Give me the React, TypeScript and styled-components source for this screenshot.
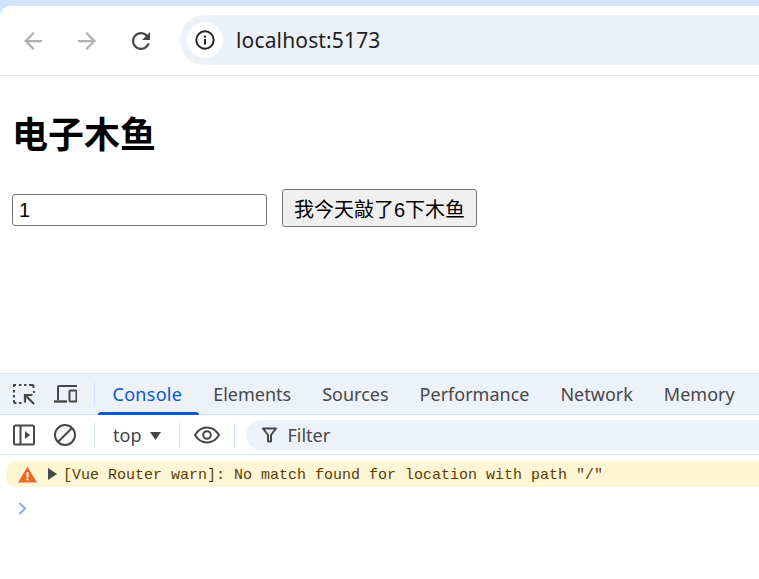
import React from "react";
import styled, { createGlobalStyle } from "styled-components";

const Global = createGlobalStyle`
  html, body { margin: 0; padding: 0; background: #fff; }
  * { box-sizing: border-box; }
`;

const Frame = styled.div`
  width: 759px;
  height: 579px;
  overflow: hidden;
  background: #d3e3fd;
  padding-top: 6px;
  display: flex;
  flex-direction: column;
  font-family: "Noto Sans", "Open Sans", sans-serif;
`;

const Toolbar = styled.header`
  height: 70px;
  flex: none;
  background: #fff;
  border-top-left-radius: 10px;
  border-bottom: 1px solid #e1e3e6;
  display: flex;
  align-items: center;
  padding: 0 0 1px 21px;
`;

const NavButton = styled.div`
  width: 24px;
  height: 24px;
  flex: none;
  margin: 2px 30px 0 0;
  color: ${(p: { $dim?: boolean }) => (p.$dim ? "#aeb0b3" : "#474747")};
  svg { display: block; }
`;

const Omnibox = styled.div`
  flex: 1;
  height: 50px;
  margin-left: -3px;
  margin-right: -40px;
  background: #ecf0f9;
  border-radius: 25px;
  display: flex;
  align-items: center;
  padding-left: 7px;
`;

const SiteInfo = styled.div`
  width: 36px;
  height: 36px;
  border-radius: 50%;
  background: #fff;
  display: flex;
  align-items: center;
  justify-content: center;
  color: #1f1f1f;
`;

const Url = styled.span`
  margin-left: 13px;
  font-size: 21px;
  letter-spacing: 0.15px;
  line-height: 24px;
  color: #1f1f1f;
`;

const Page = styled.main`
  height: 297px;
  flex: none;
  background: #fff;
  padding: 0 12px;
`;

const Title = styled.h1`
  margin: 0;
  padding: 38px 0 0;
  height: 113px;
  font-family: "Liberation Sans", "Noto Sans CJK SC", sans-serif;
  font-size: 36px;
  line-height: 44px;
  font-weight: 700;
  color: #000;
`;

const Form = styled.div`
  display: flex;
  align-items: flex-start;
  gap: 15px;
`;

const CountInput = styled.input`
  width: 255px;
  height: 32px;
  margin-top: 5px;
  padding: 1px 6px;
  border: 1px solid #767676;
  border-radius: 3px;
  background: #fff;
  color: #000;
  font-family: "Liberation Sans", sans-serif;
  font-size: 20px;
`;

const HitButton = styled.button`
  width: 195px;
  height: 38px;
  padding: 0;
  border: 1px solid #767676;
  border-radius: 3px;
  background: #efefef;
  color: #000;
  font-family: "Liberation Sans", "Noto Sans CJK SC", sans-serif;
  font-size: 20px;
  white-space: nowrap;
`;

const Devtools = styled.section`
  flex: 1;
  background: #fff;
  display: flex;
  flex-direction: column;
`;

const TabBar = styled.div`
  height: 42px;
  flex: none;
  background: #edf1f9;
  border-top: 1px solid #d3e3fd;
  border-bottom: 1px solid #d3e3fd;
  display: flex;
  align-items: stretch;
  padding-left: 12px;
  color: #474747;
`;

const ToolIcon = styled.div`
  flex: none;
  width: 24px;
  margin-right: 17px;
  display: flex;
  align-items: center;
  svg { display: block; }
`;

const Divider = styled.div`
  flex: none;
  width: 1px;
  height: 24px;
  background: #d3e3fd;
  align-self: center;
`;

const Tab = styled.div<{ $active?: boolean }>`
  position: relative;
  flex: none;
  padding: 0 15.5px;
  display: flex;
  align-items: center;
  font-size: 18px;
  letter-spacing: ${(p) => (p.$active ? "0.28px" : "0")};
  color: ${(p) => (p.$active ? "#0b57d0" : "#474747")};
  &::after {
    content: "";
    display: ${(p) => (p.$active ? "block" : "none")};
    position: absolute;
    left: 1px;
    right: -1px;
    bottom: -1px;
    height: 3px;
    border-radius: 3px 3px 0 0;
    background: #0b57d0;
  }
`;

const TabList = styled.div`
  display: flex;
  margin-left: 2px;
`;

const FilterBar = styled.div`
  height: 40px;
  flex: none;
  background: #fff;
  border-bottom: 1px solid #d3e3fd;
  display: flex;
  align-items: center;
  padding-left: 12px;
  color: #474747;
`;

const ContextSelect = styled.div`
  display: flex;
  align-items: center;
  gap: 9px;
  padding: 0 18px;
  font-size: 18px;
  svg { margin-top: 2px; }
`;

const Eye = styled.div`
  flex: none;
  padding: 0 14px;
  display: flex;
  svg { display: block; }
`;

const FilterPill = styled.div`
  flex: 1;
  height: 30px;
  margin-left: 11px;
  margin-right: -40px;
  border-radius: 15px;
  background: #edf1f9;
  display: flex;
  align-items: center;
  gap: 10px;
  padding-left: 16px;
  font-size: 18px;
`;

const Messages = styled.div`
  padding: 6px 0 0 6px;
`;

const WarnRow = styled.div`
  height: 26px;
  margin-right: -20px;
  background: #fef6d5;
  border-radius: 9px 0 0 9px;
  display: flex;
  align-items: center;
  padding-left: 12px;
`;

const Expander = styled.svg`
  flex: none;
  margin-left: 11px;
  margin-right: 6px;
`;

const WarnText = styled.span`
  padding-top: 2px;
  font-family: "Liberation Mono", monospace;
  font-size: 15px;
  color: #5c3b00;
  white-space: pre;
`;

const Prompt = styled.div`
  margin: 15px 0 0 12px;
  svg { display: block; }
`;

const Back = () => (
  <svg width="24" height="24" viewBox="1.33 1.33 21.33 21.33" fill="currentColor">
    <path d="M20 11H7.83l5.59-5.59L12 4l-8 8 8 8 1.41-1.41L7.83 13H20v-2z" />
  </svg>
);

const Forward = () => (
  <svg width="24" height="24" viewBox="1.33 1.33 21.33 21.33" fill="currentColor">
    <path d="M4 11h12.17l-5.59-5.59L12 4l8 8-8 8-1.41-1.41L16.17 13H4v-2z" />
  </svg>
);

const Reload = () => (
  <svg width="24" height="24" viewBox="1.33 1.33 21.33 21.33" fill="currentColor">
    <path d="M17.65 6.35C16.2 4.9 14.21 4 12 4c-4.42 0-7.99 3.58-7.99 8s3.57 8 7.99 8c3.73 0 6.84-2.55 7.73-6h-2.08c-.82 2.33-3.04 4-5.65 4-3.31 0-6-2.69-6-6s2.69-6 6-6c1.66 0 3.14.69 4.22 1.78L13 11h7V4l-2.35 2.35z" />
  </svg>
);

const Info = () => (
  <svg width="20" height="20" viewBox="0 0 20 20" fill="none">
    <circle cx="10" cy="10" r="8.7" stroke="currentColor" strokeWidth="1.9" />
    <rect x="9" y="9" width="2" height="5.5" fill="currentColor" />
    <rect x="9" y="5.6" width="2" height="2" fill="currentColor" />
  </svg>
);

const Inspect = () => (
  <svg width="24" height="24" viewBox="0 0 24 24" fill="none" stroke="#474747">
    <path d="M2 5V3h2M7 3h2.500M12 3h2.500M17 3h3.500a1 1 0 0 1 1 1v2M22 9v2M2 8v2.500M2 13v2.500M2 18v2a1 1 0 0 0 1 1h1.500M7 21h2.500" strokeWidth="2" />
    <path d="M22 22l-8-8M13 20.500V13h7.500" strokeWidth="2.200" />
  </svg>
);

const Device = () => (
  <svg width="24" height="24" viewBox="0 0 24 24" fill="none" stroke="#474747" strokeWidth="2">
    <path d="M5 18V5a1 1 0 0 1 1-1h18" />
    <path d="M1 19.500h13" strokeWidth="2.400" />
    <rect x="16.500" y="8.500" width="7" height="11" rx="1" />
  </svg>
);

const SidebarToggle = () => (
  <svg width="24" height="24" viewBox="0 0 24 24" fill="none">
    <rect x="2" y="2.500" width="20" height="19" rx="1.500" stroke="#474747" strokeWidth="2" />
    <path d="M8.500 3v18" stroke="#474747" strokeWidth="2" />
    <path d="M13 8l5 4-5 4z" fill="#474747" />
  </svg>
);

const Block = () => (
  <svg width="24" height="24" viewBox="0 0 24 24" fill="none" stroke="#474747" strokeWidth="2">
    <circle cx="12" cy="12" r="10" />
    <path d="M5 19L19 5" />
  </svg>
);

const Caret = () => (
  <svg width="11" height="8" viewBox="0 0 11 8">
    <path d="M0 0h11L5.500 8z" fill="#474747" />
  </svg>
);

const EyeIcon = () => (
  <svg width="26" height="18" viewBox="0 0 26 18" fill="none" stroke="#474747" strokeWidth="2">
    <path d="M1 9c3-5 7.500-7.500 12-7.500S22 4 25 9c-3 5-7.500 7.500-12 7.500S4 14 1 9z" />
    <circle cx="13" cy="9" r="3.800" />
  </svg>
);

const FilterIcon = () => (
  <svg width="15" height="16" viewBox="0 0 15 16" fill="none" stroke="#474747" strokeWidth="2">
    <path d="M1 1.500h13L9 8v6.500H6V8z" strokeLinejoin="round" />
  </svg>
);

const WarnIcon = () => (
  <svg width="19" height="17" viewBox="0 0 19 17">
    <path d="M9.500 0.500L19 16.500H0z" fill="#ea6a2a" />
    <rect x="8.600" y="6" width="1.800" height="5.500" fill="#fff" />
    <rect x="8.600" y="12.500" width="1.800" height="1.800" fill="#fff" />
  </svg>
);

const Chevron = () => (
  <svg width="9" height="13" viewBox="0 0 9 13" fill="none">
    <path d="M1.500 1l5.500 5.500L1.500 12" stroke="#7aa7f7" strokeWidth="1.800" />
  </svg>
);

export default function App() {
  return (
    <>
      <Global />
      <Frame>
        <Toolbar>
          <NavButton $dim><Back /></NavButton>
          <NavButton $dim><Forward /></NavButton>
          <NavButton><Reload /></NavButton>
          <Omnibox>
            <SiteInfo><Info /></SiteInfo>
            <Url>localhost:5173</Url>
          </Omnibox>
        </Toolbar>
        <Page>
          <Title>电子木鱼</Title>
          <Form>
            <CountInput defaultValue="1" />
            <HitButton>我今天敲了6下木鱼</HitButton>
          </Form>
        </Page>
        <Devtools>
          <TabBar>
            <ToolIcon><Inspect /></ToolIcon>
            <ToolIcon><Device /></ToolIcon>
            <Divider />
            <TabList>
              <Tab $active>Console</Tab>
              <Tab>Elements</Tab>
              <Tab>Sources</Tab>
              <Tab>Performance</Tab>
              <Tab>Network</Tab>
              <Tab>Memory</Tab>
            </TabList>
          </TabBar>
          <FilterBar>
            <ToolIcon><SidebarToggle /></ToolIcon>
            <ToolIcon><Block /></ToolIcon>
            <Divider />
            <ContextSelect>top <Caret /></ContextSelect>
            <Divider />
            <Eye><EyeIcon /></Eye>
            <Divider />
            <FilterPill><FilterIcon />Filter</FilterPill>
          </FilterBar>
          <Messages>
            <WarnRow>
              <WarnIcon />
              <Expander width="9" height="12" viewBox="0 0 9 12">
                <path d="M0 0l9 6-9 6z" fill="#474747" />
              </Expander>
              <WarnText>[Vue Router warn]: No match found for location with path "/"</WarnText>
            </WarnRow>
            <Prompt><Chevron /></Prompt>
          </Messages>
        </Devtools>
      </Frame>
    </>
  );
}
